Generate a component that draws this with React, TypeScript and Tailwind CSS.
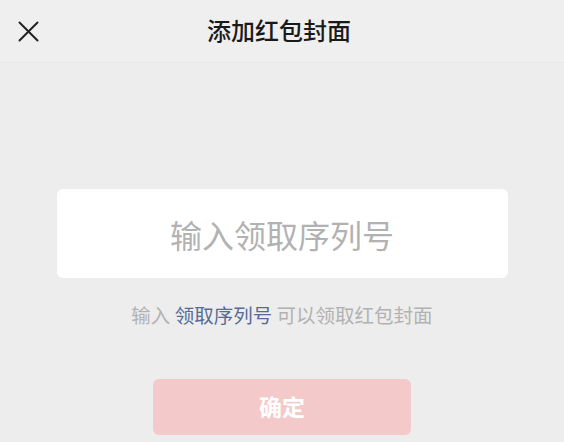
export default function App() {
  const font = { fontFamily: '"Noto Sans CJK SC", "Noto Sans", sans-serif' };
  return (
    <div className="w-[564px] h-[442px] overflow-hidden bg-[#ededed] flex flex-col" style={font}>
      {/* header */}
      <div className="h-[63px] shrink-0 bg-[#efefef] border-b border-[#e9e9e9] relative flex items-center justify-center">
        <button className="absolute left-[17px] top-[20px] w-[22px] h-[22px] flex items-center justify-center">
          <svg width="21" height="21" viewBox="0 0 21 21" fill="none" stroke="#222" strokeWidth="2" strokeLinecap="round">
            <path d="M1.5 1.5 L19.5 19.5 M19.5 1.5 L1.5 19.5" />
          </svg>
        </button>
        <h1 className="text-[24px] font-medium text-[#1a1a1a] leading-none -mt-[2px] mr-[6px]">添加红包封面</h1>
      </div>

      {/* body */}
      <div className="flex flex-col items-center pt-[126px]">
        <div className="w-[451px] h-[89px] bg-white rounded-[6px] flex items-center justify-center">
          <span className="text-[32px] text-[#b2b2b2] leading-none">输入领取序列号</span>
        </div>
        <p className="mt-[27px] text-[19.5px] leading-none text-[#b2b2b2]">
          输入 <span className="text-[#576b95]">领取序列号</span> 可以领取红包封面
        </p>
        <button className="mt-[54px] w-[258px] h-[56px] rounded-[6px] bg-[#f4c9ca] text-white text-[23px] font-bold flex items-center justify-center">
          确定
        </button>
      </div>
    </div>
  );
}
